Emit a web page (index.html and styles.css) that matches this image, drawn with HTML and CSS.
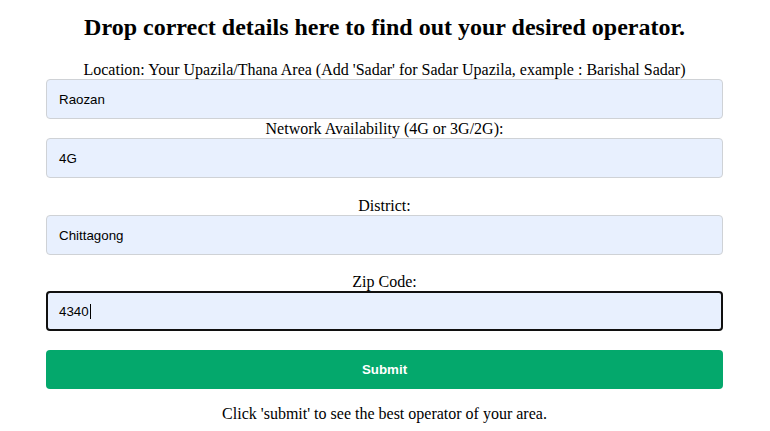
FILE: index.html
```html
<!DOCTYPE html>
<html>
<head>
<meta charset="utf-8">
<link rel="stylesheet" href="styles.css">
</head>
<body>
<div class="wrap">
  <h2 class="title">Drop correct details here to find out your desired operator.</h2>
  <form class="form">
    <label class="lbl">Location: Your Upazila/Thana Area (Add 'Sadar' for Sadar Upazila, example : Barishal Sadar)</label>
    <div class="field">Raozan</div>
    <label class="lbl">Network Availability (4G or 3G/2G):</label>
    <div class="field">4G</div>
    <label class="lbl gap">District:</label>
    <div class="field">Chittagong</div>
    <label class="lbl gap2">Zip Code:</label>
    <div class="field focus">4340<span class="caret"></span></div>
    <button type="button" class="submit">Submit</button>
  </form>
  <p class="note">Click 'submit' to see the best operator of your area.</p>
</div>
</body>
</html>
```

FILE: styles.css
```css
html, body {
  margin: 0;
  padding: 0;
  background: #fff;
}
body {
  font-family: "Liberation Serif", "Times New Roman", serif;
  color: #000;
}
.wrap {
  width: 677px;
  margin: 0 0 0 46px;
  padding-top: 13px;
}
.title {
  margin: 0;
  font-size: 24px;
  line-height: 28px;
  font-weight: bold;
  text-align: center;
}
.form {
  display: flex;
  flex-direction: column;
  margin-top: 19px;
}
.lbl {
  display: block;
  text-align: center;
  font-size: 16px;
  line-height: 19px;
  height: 19px;
}
.lbl.gap {
  margin-top: 18px;
}
.lbl.gap2 {
  margin-top: 17px;
}
.field {
  box-sizing: border-box;
  height: 40px;
  background: #e8f0fe;
  border: 1px solid #cfd2d6;
  border-radius: 4px;
  padding: 0 12px;
  display: flex;
  align-items: center;
  font-family: "Liberation Sans", Arial, sans-serif;
  font-size: 13.33px;
  color: #000;
}
.field.focus {
  border: 2px solid #101010;
  padding-left: 11px;
}
.caret {
  display: inline-block;
  width: 1px;
  height: 15px;
  background: #000;
  margin-left: 1px;
}
.submit {
  margin-top: 19px;
  height: 39px;
  border: none;
  border-radius: 4px;
  background: #04a86c;
  color: #fff;
  font-family: "Liberation Sans", Arial, sans-serif;
  font-size: 13.33px;
  font-weight: bold;
}
.note {
  margin: 16px 0 0;
  text-align: center;
  font-size: 16px;
  line-height: 18px;
}
```
